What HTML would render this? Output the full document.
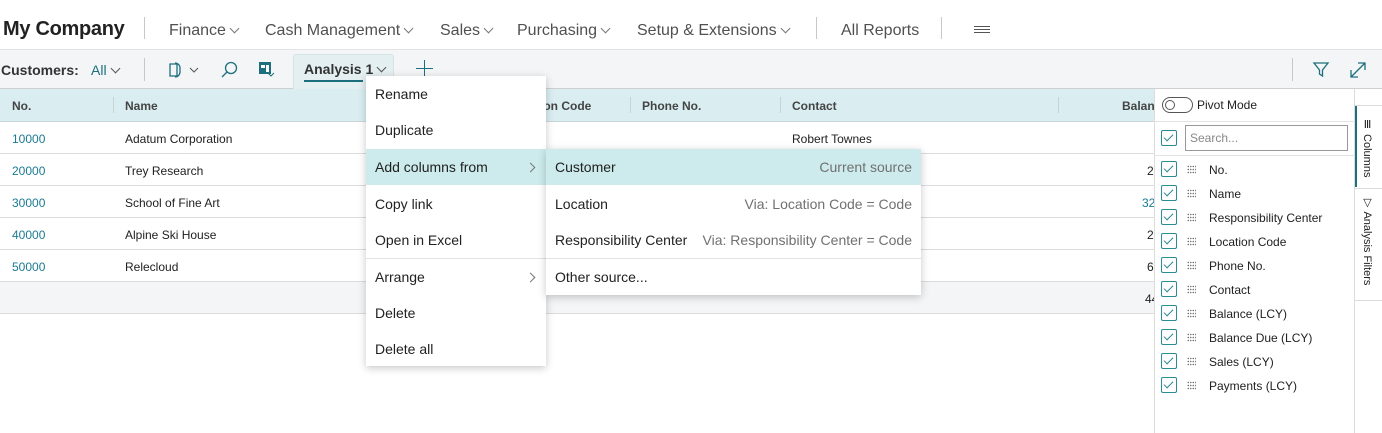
<!DOCTYPE html>
<html><head><meta charset="utf-8"><style>
*{margin:0;padding:0;box-sizing:border-box}
body{width:1382px;height:433px;overflow:hidden;background:#fff;font-family:"Segoe UI","Liberation Sans",sans-serif;color:#212121;position:relative}
.a{position:absolute;white-space:nowrap}
.nav{font-size:16px;color:#505050;top:22px}
.chev{display:inline-block;width:7px;height:7px;border-right:1px solid #777;border-bottom:1px solid #777;transform:rotate(45deg);margin-left:5px;position:relative;top:-3px}
.row{position:absolute;left:0;width:1154px;height:32px;border-bottom:1px solid #dcdcdc;font-size:12px}
.row span{position:absolute;top:10px}
.no{left:12px;color:#1a7a94}
.hd{font-size:12px;font-weight:600;color:#444;top:99px}
.menu{position:absolute;background:#fff;box-shadow:0 2px 8px rgba(0,0,0,.22);font-size:14px}
.mi{position:absolute;left:0;right:0;height:36px;padding:10px 9px}
.sep{position:absolute;left:0;right:0;height:1px;background:#e3e3e3}
.rc{position:absolute;right:9px;top:10px;color:#707070}
.arr{position:absolute;right:12px;top:15px;width:7px;height:7px;border-right:1px solid #777;border-top:1px solid #777;transform:rotate(45deg)}
.cb{position:absolute;left:7px;width:16px;height:16px;border:1.5px solid #2a8a96;border-radius:2px}
.cb::after{content:"";position:absolute;left:4px;top:1px;width:4px;height:8px;border-right:1.5px solid #2a8a96;border-bottom:1.5px solid #2a8a96;transform:rotate(45deg)}
.pl{position:absolute;font-size:12px;left:55px}
.dots{position:absolute;left:33px;width:9px;height:9px;background:radial-gradient(circle,#777 0.7px,transparent 0.9px) 0 0/2.5px 3px}
</style></head><body>
<div class="a" style="left:3px;top:18px;font-size:20px;font-weight:600;color:#222;letter-spacing:-0.3px">My Company</div>
<div class="a" style="left:144px;top:17px;width:1px;height:22px;background:#c8c8c8"></div>
<div class="a nav" style="left:169px">Finance<span class="chev"></span></div>
<div class="a nav" style="left:265px">Cash Management<span class="chev"></span></div>
<div class="a nav" style="left:440px">Sales<span class="chev"></span></div>
<div class="a nav" style="left:517px">Purchasing<span class="chev"></span></div>
<div class="a nav" style="left:637px">Setup &amp; Extensions<span class="chev"></span></div>
<div class="a" style="left:816px;top:17px;width:1px;height:22px;background:#c8c8c8"></div>
<div class="a nav" style="left:841px">All Reports</div>
<div class="a" style="left:941px;top:17px;width:1px;height:22px;background:#c8c8c8"></div>
<div class="a" style="left:974px;top:26px;width:16px;height:1px;background:#555;box-shadow:0 3px 0 #555,0 6px 0 #555"></div>
<div class="a" style="left:0;top:49px;width:1382px;height:40px;background:#f4f5f6;border-top:1px solid #e3e3e3;border-bottom:1px solid #cfcfcf"></div>
<div class="a" style="left:1px;top:62px;font-size:14px;font-weight:600;color:#333">Customers:</div>
<div class="a" style="left:91px;top:62px;font-size:14px;color:#1d6f7d">All<span class="chev" style="border-color:#555"></span></div>
<div class="a" style="left:144px;top:58px;width:1px;height:23px;background:#c8c8c8"></div>
<svg class="a" style="left:166px;top:60px" width="40" height="20"><path d="M4 4h7v12H4zM9 3a5 5 0 0 1 5 5v4a5 5 0 0 1-5 5" fill="none" stroke="#1d6f7d" stroke-width="1.3"/><path d="M24 8l4 4 4-4" fill="none" stroke="#555"/></svg>
<svg class="a" style="left:220px;top:60px" width="20" height="20"><circle cx="11" cy="8" r="5.5" fill="none" stroke="#1d6f7d" stroke-width="1.3"/><path d="M7 12l-5 5" stroke="#1d6f7d" stroke-width="1.3"/></svg>
<svg class="a" style="left:257px;top:60px" width="18" height="18"><rect x="2" y="2" width="12" height="12" fill="#1d6f7d"/><rect x="4" y="5" width="4" height="3" fill="#fff"/><rect x="9" y="5" width="3" height="7" fill="#fff"/><path d="M11 13l3 3 3-3" stroke="#1d6f7d" fill="none"/></svg>
<div class="a" style="left:293px;top:54px;width:101px;height:35px;background:#e4eff1;border:1px solid #d5e3e6;border-bottom:none;border-radius:3px 3px 0 0"></div>
<div class="a" style="left:304px;top:61px;font-size:14px;font-weight:600;color:#333">Analysis 1<span class="chev" style="border-color:#555"></span></div>
<div class="a" style="left:304px;top:80px;width:59px;height:2px;background:#1d6f7d"></div>
<div class="a" style="left:416px;top:68px;width:17px;height:1px;background:#1d6f7d"></div>
<div class="a" style="left:424px;top:60px;width:1px;height:17px;background:#1d6f7d"></div>
<div class="a" style="left:1292px;top:58px;width:1px;height:23px;background:#c8c8c8"></div>
<svg class="a" style="left:1312px;top:61px" width="18" height="18"><path d="M2 2h14l-5.5 7v6l-3-2V9z" fill="none" stroke="#1d6f7d" stroke-width="1.3"/></svg>
<svg class="a" style="left:1349px;top:61px" width="18" height="18"><path d="M2 16L16 2M9 2h7v7M2 9v7h7" fill="none" stroke="#1d6f7d" stroke-width="1.3"/></svg>
<div class="a" style="left:0;top:89px;width:1154px;height:33px;background:#daeef1;border-bottom:1px solid #c9d7da"></div>
<div class="a hd" style="left:12px">No.</div>
<div class="a" style="left:113px;top:97px;width:1px;height:16px;background:#c4d4d6"></div>
<div class="a hd" style="left:125px">Name</div>
<div class="a hd" style="left:508px">Location Code</div>
<div class="a" style="left:630px;top:97px;width:1px;height:16px;background:#c4d4d6"></div>
<div class="a hd" style="left:642px">Phone No.</div>
<div class="a" style="left:780px;top:97px;width:1px;height:16px;background:#c4d4d6"></div>
<div class="a hd" style="left:792px">Contact</div>
<div class="a" style="left:1058px;top:97px;width:1px;height:16px;background:#c4d4d6"></div>
<div class="a hd" style="left:1122px;width:32px;overflow:hidden">Balance</div>
<div class="row" style="top:122px"><span class="no">10000</span><span style="left:125px">Adatum Corporation</span><span style="left:792px">Robert Townes</span></div>
<div class="row" style="top:154px"><span class="no">20000</span><span style="left:125px">Trey Research</span><span style="left:1147px">2</span></div>
<div class="row" style="top:186px"><span class="no">30000</span><span style="left:125px">School of Fine Art</span><span style="left:1142px;color:#1a7a94">32</span></div>
<div class="row" style="top:218px"><span class="no">40000</span><span style="left:125px">Alpine Ski House</span><span style="left:1147px">2</span></div>
<div class="row" style="top:250px"><span class="no">50000</span><span style="left:125px">Relecloud</span><span style="left:1147px">6</span></div>
<div class="row" style="top:282px;background:#f4f5f6"><span style="left:1145px">44</span></div>
<div class="a" style="left:1154px;top:89px;width:201px;height:344px;background:#fff;border-left:1px solid #dcdcdc"></div>
<div class="a" style="left:1354px;top:89px;width:1px;height:344px;background:#dcdcdc"></div>
<div class="a" style="left:1162px;top:97px;width:31px;height:16px;border:1.5px solid #555;border-radius:8px"></div>
<div class="a" style="left:1165px;top:100px;width:10px;height:10px;border:1.3px solid #555;border-radius:50%"></div>
<div class="a" style="left:1197px;top:98px;font-size:12px">Pivot Mode</div>
<div class="a" style="left:1154px;top:121px;width:201px;height:1px;background:#e3e3e3"></div>
<div class="cb" style="left:1161px;top:130px"></div>
<div class="a" style="left:1185px;top:125px;width:163px;height:26px;border:1px solid #999;font-size:12px;color:#888;padding:5px 4px">Search...</div>
<div class="a" style="left:1154px;top:155px;width:201px;height:1px;background:#e3e3e3"></div>
<div class="a" style="left:1154px;top:161px;width:201px;height:240px">
<div class="cb" style="top:0"></div><div class="dots" style="top:4px"></div><div class="pl" style="top:2px">No.</div>
<div class="cb" style="top:24px"></div><div class="dots" style="top:28px"></div><div class="pl" style="top:26px">Name</div>
<div class="cb" style="top:48px"></div><div class="dots" style="top:52px"></div><div class="pl" style="top:50px">Responsibility Center</div>
<div class="cb" style="top:72px"></div><div class="dots" style="top:76px"></div><div class="pl" style="top:74px">Location Code</div>
<div class="cb" style="top:96px"></div><div class="dots" style="top:100px"></div><div class="pl" style="top:98px">Phone No.</div>
<div class="cb" style="top:120px"></div><div class="dots" style="top:124px"></div><div class="pl" style="top:122px">Contact</div>
<div class="cb" style="top:144px"></div><div class="dots" style="top:148px"></div><div class="pl" style="top:146px">Balance (LCY)</div>
<div class="cb" style="top:168px"></div><div class="dots" style="top:172px"></div><div class="pl" style="top:170px">Balance Due (LCY)</div>
<div class="cb" style="top:192px"></div><div class="dots" style="top:196px"></div><div class="pl" style="top:194px">Sales (LCY)</div>
<div class="cb" style="top:216px"></div><div class="dots" style="top:220px"></div><div class="pl" style="top:218px">Payments (LCY)</div>
</div>
<div class="a" style="left:1355px;top:105px;width:27px;height:1px;background:#dcdcdc"></div>
<div class="a" style="left:1355px;top:106px;width:2px;height:81px;background:#1d6f7d"></div>
<div class="a" style="left:1355px;top:188px;width:27px;height:1px;background:#dcdcdc"></div>
<div class="a" style="left:1355px;top:300px;width:27px;height:1px;background:#dcdcdc"></div>
<div class="a" style="left:1361px;top:118px;font-size:11px;writing-mode:vertical-rl">Ⅲ Columns</div>
<div class="a" style="left:1361px;top:196px;font-size:11px;writing-mode:vertical-rl">▽ Analysis Filters</div>
<div class="menu" style="left:366px;top:76px;width:180px;height:290px">
<div class="mi" style="top:0">Rename</div>
<div class="mi" style="top:36px">Duplicate</div>
<div class="mi" style="top:73px;background:#cdebec">Add columns from<span class="arr"></span></div>
<div class="mi" style="top:110px">Copy link</div>
<div class="mi" style="top:146px">Open in Excel</div>
<div class="sep" style="top:182px"></div>
<div class="mi" style="top:183px">Arrange<span class="arr"></span></div>
<div class="mi" style="top:219px">Delete</div>
<div class="mi" style="top:255px">Delete all</div>
</div>
<div class="menu" style="left:546px;top:149px;width:375px;height:146px">
<div class="mi" style="top:0;background:#cdebec">Customer<span class="rc">Current source</span></div>
<div class="mi" style="top:37px">Location<span class="rc">Via: Location Code = Code</span></div>
<div class="mi" style="top:73px">Responsibility Center<span class="rc">Via: Responsibility Center = Code</span></div>
<div class="sep" style="top:109px"></div>
<div class="mi" style="top:110px">Other source...</div>
</div>
</body></html>
